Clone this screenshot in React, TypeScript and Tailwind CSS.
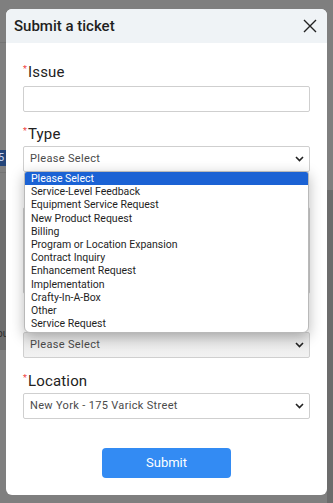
import React from 'react';

const typeOptions = [
  'Please Select',
  'Service-Level Feedback',
  'Equipment Service Request',
  'New Product Request',
  'Billing',
  'Program or Location Expansion',
  'Contract Inquiry',
  'Enhancement Request',
  'Implementation',
  'Crafty-In-A-Box',
  'Other',
  'Service Request',
];

const Chevron = () => (
  <svg width="9" height="6" viewBox="0 0 9 6" className="shrink-0">
    <path d="M1 1l3.5 3.5L8 1" fill="none" stroke="#222" strokeWidth="1.6" />
  </svg>
);

const Label = ({ text }: { text: string }) => (
  <div className="flex items-start h-5 leading-[23px] text-[15px] tracking-[0.01em] text-[#222]">
    <span className="text-[9px] leading-[16px] text-[#ef4444] mr-[1px]">*</span>
    {text}
  </div>
);

const SelectBox = ({ value, shaded }: { value: string; shaded?: boolean }) => (
  <div
    className={`h-[26px] border border-[#cfcfcf] rounded-[2px] flex items-center justify-between pl-[6px] pr-[5px] text-[11px] tracking-[0.03em] text-[#4a4a4a] ${
      shaded ? 'bg-gradient-to-b from-[#e6e6e6] to-[#f2f2f2]' : 'bg-white'
    }`}
  >
    <span>{value}</span>
    <Chevron />
  </div>
);

export default function App() {
  return (
    <div
      className="relative w-full h-[503px] overflow-hidden bg-[#7f7f7f]"
      style={{ fontFamily: 'Roboto, "Liberation Sans", sans-serif' }}
    >
      {/* dimmed page behind the modal */}
      <div className="absolute left-0 top-[42px] w-[6px] h-[1px] bg-[#747474]" />
      <div className="absolute left-0 top-[150px] w-[6px] h-[16px] bg-[#24457a] text-[11px] leading-4 text-[#c9d6ee] overflow-hidden">
        <span className="ml-[-2px]">5</span>
      </div>
      <div className="absolute left-0 top-[172px] w-[6px] h-[1px] bg-[#747474]" />
      <div className="absolute left-0 top-[200px] w-[6px] h-[150px] bg-[#6e6e6e]" />
      <div className="absolute left-0 top-[328px] text-[10px] leading-3 text-[#2a2a2a] ml-[-3px]">ou</div>
      <div className="absolute right-0 top-[190px] w-[6px] h-[313px] bg-[#6c6c6c]" />

      {/* modal */}
      <div className="relative pt-[9px] px-[6px]">
        <div className="bg-white rounded-[6px] h-[486px] flex flex-col">
          <div className="h-[34px] bg-[#eff3f6] rounded-t-[6px] flex items-center justify-between pl-[8px] pr-[10px]">
            <span className="text-[15px] font-medium text-[#1f1f1f]">Submit a ticket</span>
            <svg width="14" height="14" viewBox="0 0 14 14">
              <path d="M1 1l12 12M13 1L1 13" stroke="#222" strokeWidth="1.4" fill="none" />
            </svg>
          </div>

          <div className="px-[17px] pt-[18px] flex flex-col">
            <Label text="Issue" />
            <div className="mt-[5px] h-[26px] border border-[#cfcfcf] rounded-[2px] bg-white" />

            <div className="mt-[11px]">
              <Label text="Type" />
            </div>
            <div className="relative mt-[3px]">
              <SelectBox value="Please Select" />
              <div className="absolute z-10 left-[1px] top-[25px] w-[285px] bg-white border border-[#b9b9b9] rounded-b-[6px] rounded-t-[3px] shadow-[0_4px_14px_rgba(0,0,0,0.28)] overflow-hidden pb-[2px]">
                {typeOptions.map((o, i) => (
                  <div
                    key={o}
                    className={`h-[13.2px] leading-[13.2px] px-[6px] text-[10.5px] ${
                      i === 0 ? 'bg-[#1b62d4] text-white' : 'text-[#1f1f1f]'
                    }`}
                  >
                    {o}
                  </div>
                ))}
              </div>
            </div>

            {/* fields hidden under the open list */}
            <div className="mt-[11px] h-5" />
            <div className="mt-[4px] h-[87px] border border-[#cfcfcf] rounded-[2px] bg-white" />
            <div className="mt-[11px] h-5" />
            <div className="mt-[7px]">
              <SelectBox value="Please Select" shaded />
            </div>

            <div className="mt-[12px]">
              <Label text="Location" />
            </div>
            <div className="mt-[3px]">
              <SelectBox value="New York - 175 Varick Street" />
            </div>

            <div className="flex justify-center mt-[29px]">
              <button className="w-[129px] h-[30px] rounded-[4px] bg-[#338bf3] text-white text-[13px]">
                Submit
              </button>
            </div>
          </div>
        </div>
      </div>
    </div>
  );
}
